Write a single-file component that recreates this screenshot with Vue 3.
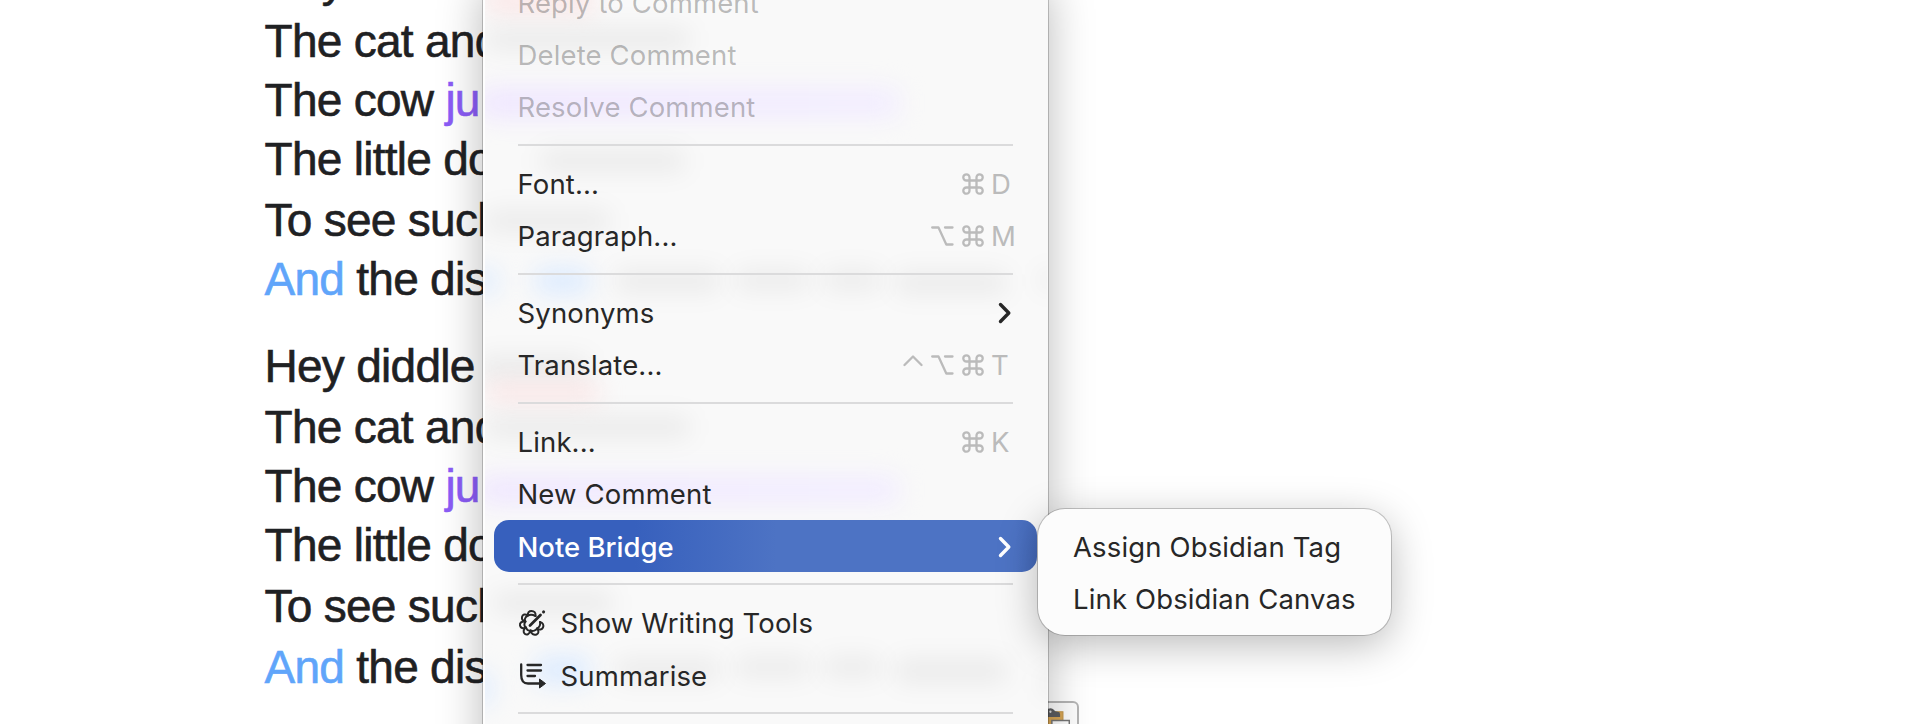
<template>
  <div class="desktop">
    <main class="document">
      <p v-for="(line, i) in lines" :key="i" class="line" :class="{ 'stanza-start': line.first }" :style="{ height: line.height + 'px' }">
        <span v-for="(run, j) in line.runs" :key="j" :class="run.color">{{ run.text }}</span>
      </p>
    </main>

    <div class="paste-button">
      <svg width="30" height="32" viewBox="0 0 30 32">
        <rect x="-2" y="8.500" width="17.500" height="26" fill="#d9a654" stroke="#c1944a" />
        <path d="M0 14V5.500Q4 4 6 6.500Q7 8.500 10 8.500Q12.500 8.500 12.500 11V14Z" fill="#5d5e61" />
        <circle cx="2.500" cy="8.500" r="1.200" fill="#ddd" />
        <path d="M4 34V17.500H22V34" fill="#fff" stroke="#777" stroke-width="1.500" />
      </svg>
    </div>

    <nav class="menu">
      <div class="ghosts">
        <i v-for="(g, i) in ghosts" :key="i" :class="g.tone" :style="{ left: g.x + 'px', top: g.y + 'px', width: g.w + 'px', height: g.h + 'px' }"></i>
      </div>
      <template v-for="(item, i) in items" :key="i">
        <div v-if="item.separator" class="separator"></div>
        <div v-else class="item" :class="{ disabled: item.disabled, active: item.active }">
          <svg v-if="item.icon === 'tools'" class="icon" width="28" height="28" viewBox="0 0 28 28">
            <g fill="none" stroke="currentColor" stroke-width="2" stroke-linecap="round" stroke-linejoin="round">
              <path d="M17.500 7C18 3.500 16 2 13.500 2S9.500 3.500 10 6.500C7 4.500 4.500 5.500 4 8S5 12 7.500 12.500C3.500 12 1.500 14 2 16.500S5 20 8 18.500C5 20.500 5 23.500 7 25S11.500 25 12.500 21.500C13 25 16 26.500 18.500 25.500S21 22 19 19.500C21.500 21.500 24 20.500 25 18.500S25 13.500 22 13" />
              <path d="M17.500 7C14.500 5.500 11 6 10 6.500C7 8 6 11 7.500 12.500C5.800 14.500 6 17.500 8 18.500C9 21 11 22 12.500 21.500C15 22.500 18 21.500 19 19.500C22 18 22.500 15.500 22 13" />
              <path d="M12 16.500L22.500 6" stroke-width="2.800" />
              <path d="M25.500 3L25.600 2.900" stroke-width="3" />
            </g>
          </svg>
          <svg v-if="item.icon === 'summary'" class="icon" width="28" height="28" viewBox="0 0 28 28">
            <g fill="none" stroke="currentColor" stroke-width="2.300" stroke-linecap="round">
              <path d="M3.200 2.500V13Q3.200 21.500 10 21.500H21" />
              <path d="M9.500 3H23M9.500 8.500H23M9.500 14H17" />
            </g>
            <path d="M21.500 17L27.500 21.500L21.500 26Z" fill="currentColor" stroke="currentColor" stroke-linejoin="round" />
          </svg>
          <span class="label">{{ item.label }}</span>
          <span v-if="item.keys" class="shortcut">
            <svg v-if="item.keys.includes('ctrl')" class="ctrl" width="20" height="22" viewBox="0 0 20 22">
              <path d="M1.500 11L10 2.500L18.500 11" />
            </svg>
            <svg v-if="item.keys.includes('alt')" class="alt" width="23" height="22" viewBox="0 0 23 22">
              <path d="M1.200 2.500H7.500L15.300 19.500H21.500M14 2.500H21.500" />
            </svg>
            <svg v-if="item.keys.includes('cmd')" class="cmd" width="22" height="22" viewBox="0 0 22 22">
              <path d="M7.500 7.500H14.500V14.500H7.500ZM7.500 7.500V4.500A3.100 3.100 0 1 0 4.400 7.500ZM14.500 7.500H17.600A3.100 3.100 0 1 0 14.500 4.500ZM14.500 14.500V17.500A3.100 3.100 0 1 0 17.600 14.500ZM7.500 14.500H4.400A3.100 3.100 0 1 0 7.500 17.500Z" />
            </svg>
            <span class="key">{{ item.key }}</span>
          </span>
          <svg v-if="item.children" class="chevron" width="14" height="24" viewBox="0 0 14 24">
            <path d="M2.500 3.500L10.800 12L2.500 20.500" />
          </svg>
        </div>
      </template>
    </nav>

    <nav class="menu submenu">
      <div v-for="label in submenu" :key="label" class="item">
        <span class="label">{{ label }}</span>
      </div>
    </nav>
  </div>
</template>

<script setup>
const stanza = (heights) => [
  { first: true, height: heights[0], runs: [{ text: 'Hey diddle' }] },
  { height: heights[1], runs: [{ text: 'The cat and' }] },
  { height: heights[2], runs: [{ text: 'The cow ' }, { text: 'ju', color: 'purple' }] },
  { height: heights[3], runs: [{ text: 'The little do' }] },
  { height: heights[4], runs: [{ text: 'To see such' }] },
  { height: heights[5], runs: [{ text: 'And', color: 'blue' }, { text: ' the dis' }] }
]

const lines = [
  ...stanza([61, 59, 59, 61, 59, 60]),
  ...stanza([61, 59, 59, 61, 61, 60])
]

const items = [
  { label: 'Reply to Comment', disabled: true },
  { label: 'Delete Comment', disabled: true },
  { label: 'Resolve Comment', disabled: true },
  { separator: true },
  { label: 'Font...', keys: ['cmd'], key: 'D' },
  { label: 'Paragraph...', keys: ['alt', 'cmd'], key: 'M' },
  { separator: true },
  { label: 'Synonyms', children: true },
  { label: 'Translate...', keys: ['ctrl', 'alt', 'cmd'], key: 'T' },
  { separator: true },
  { label: 'Link...', keys: ['cmd'], key: 'K' },
  { label: 'New Comment' },
  { label: 'Note Bridge', children: true, active: true },
  { separator: true },
  { label: 'Show Writing Tools', icon: 'tools' },
  { label: 'Summarise', icon: 'summary' },
  { separator: true }
]

const submenu = ['Assign Obsidian Tag', 'Link Obsidian Canvas']

// Page content showing faintly through the translucent menu
const ghosts = [
  { tone: 'red', x: 0, y: 18, w: 110, h: 14 },
  { tone: 'grey', x: 0, y: 52, w: 205, h: 22 },
  { tone: 'purple', x: -6, y: 112, w: 420, h: 30 },
  { tone: 'grey', x: 55, y: 174, w: 145, h: 22 },
  { tone: 'grey', x: 0, y: 234, w: 125, h: 22 },
  { tone: 'blue', x: -10, y: 292, w: 22, h: 26 },
  { tone: 'blue', x: 50, y: 292, w: 55, h: 26 },
  { tone: 'grey', x: 130, y: 294, w: 105, h: 22 },
  { tone: 'grey', x: 250, y: 294, w: 75, h: 20 },
  { tone: 'grey', x: 338, y: 294, w: 58, h: 20 },
  { tone: 'grey', x: 410, y: 296, w: 112, h: 22 },
  { tone: 'grey', x: 555, y: 294, w: 20, h: 20 },
  { tone: 'grey', x: -6, y: 380, w: 110, h: 24 },
  { tone: 'red', x: 0, y: 410, w: 115, h: 12 },
  { tone: 'grey', x: 0, y: 440, w: 205, h: 22 },
  { tone: 'purple', x: -6, y: 500, w: 420, h: 28 },
  { tone: 'grey', x: 8, y: 616, w: 120, h: 22 },
  { tone: 'blue', x: -14, y: 695, w: 20, h: 34 },
  { tone: 'blue', x: 50, y: 680, w: 55, h: 28 },
  { tone: 'grey', x: 130, y: 683, w: 105, h: 22 },
  { tone: 'grey', x: 250, y: 681, w: 75, h: 20 },
  { tone: 'grey', x: 338, y: 681, w: 58, h: 20 },
  { tone: 'grey', x: 410, y: 683, w: 112, h: 24 },
  { tone: 'grey', x: 557, y: 695, w: 20, h: 24 }
]
</script>

<style>
body {
  margin: 0;
  background: #fff;
}
</style>

<style scoped>
.desktop {
  position: relative;
  width: 1924px;
  height: 724px;
  overflow: hidden;
  background: #fff;
}

.document {
  width: 483px;
  margin-top: -47px;
  padding-left: 264.5px;
  box-sizing: border-box;
  overflow: hidden;
  font-family: 'Liberation Sans', Arial, sans-serif;
  font-size: 46px;
  letter-spacing: -0.72px;
  color: #1f2123;
}

.line {
  margin: 0;
  line-height: 54px;
  white-space: pre;
  -webkit-text-stroke: 0.6px currentColor;
}

.line.stanza-start:not(:first-child) {
  margin-top: 27px;
}

.purple {
  color: #8b5cf6;
}

.blue {
  color: #60a5fa;
}

.menu {
  position: absolute;
  left: 482.500px;
  top: -24px;
  width: 565.500px;
  height: 790px;
  box-sizing: border-box;
  padding: 0 11px;
  background: #f9f9f9;
  box-shadow: 0 0 0 1px rgba(0, 0, 0, 0.2), inset 2px 0 0 rgba(255, 255, 255, 0.8), 0 12px 42px rgba(0, 0, 0, 0.28);
  font-family: Inter, 'Noto Sans', sans-serif;
  font-size: 27.5px;
  letter-spacing: 0.14px;
  color: #272727;
}

.ghosts {
  position: absolute;
  inset: 0 1px 0 2px;
  overflow: hidden;
}

.ghosts i {
  position: absolute;
  border-radius: 8px;
  filter: blur(12px);
}

.ghosts .grey {
  background: rgba(0, 0, 0, 0.06);
}

.ghosts .purple {
  background: linear-gradient(90deg, #efe6ff, #f2edff);
}

.ghosts .blue {
  background: #dcebff;
}

.ghosts .red {
  background: #fddcdc;
}

.item {
  position: relative;
  display: flex;
  align-items: center;
  height: 52.4px;
  box-sizing: border-box;
  padding: 1px 24px 0;
  border-radius: 15px;
}

.label {
  flex: 1;
  white-space: nowrap;
}

.item.disabled {
  color: rgba(0, 0, 0, 0.27);
}

.item.active {
  color: #fff;
  font-weight: 500;
  letter-spacing: 0;
  background: linear-gradient(90deg, #3760bd 0%, #3760bd 26%, #4d73c4 52%, #4d73c4 96%, #456abb 100%);
}

.separator {
  position: relative;
  height: 24.2px;
  padding: 11px 24px;
  box-sizing: border-box;
}

.separator::after {
  content: '';
  display: block;
  height: 2px;
  background: #dbdbdc;
}

.icon {
  margin-right: 15px;
}

.shortcut {
  display: flex;
  align-items: center;
  color: #bbb;
}

.shortcut svg,
.chevron {
  fill: none;
  stroke: currentColor;
  stroke-width: 2.3;
  stroke-linecap: round;
  stroke-linejoin: round;
}

.ctrl,
.alt {
  margin-right: 8px;
}

.cmd {
  margin-right: 7.5px;
}

.key {
  width: 22px;
}

.chevron {
  margin-right: 1.5px;
}

.chevron path {
  stroke-width: 3.4;
}

.submenu {
  left: 1038px;
  top: 509px;
  width: 353px;
  height: 126px;
  padding: 11px;
  border-radius: 27px;
  background: #fcfcfc;
  box-shadow: 0 0 0 1px rgba(0, 0, 0, 0.2), 0 10px 40px rgba(0, 0, 0, 0.27);
}

.paste-button {
  position: absolute;
  left: 1030px;
  top: 701px;
  display: flex;
  align-items: flex-start;
  width: 49px;
  height: 60px;
  box-sizing: border-box;
  padding-left: 16px;
  border: 2px solid #b5b5b5;
  border-radius: 6px;
  background: #fdfdfd;
}
</style>
